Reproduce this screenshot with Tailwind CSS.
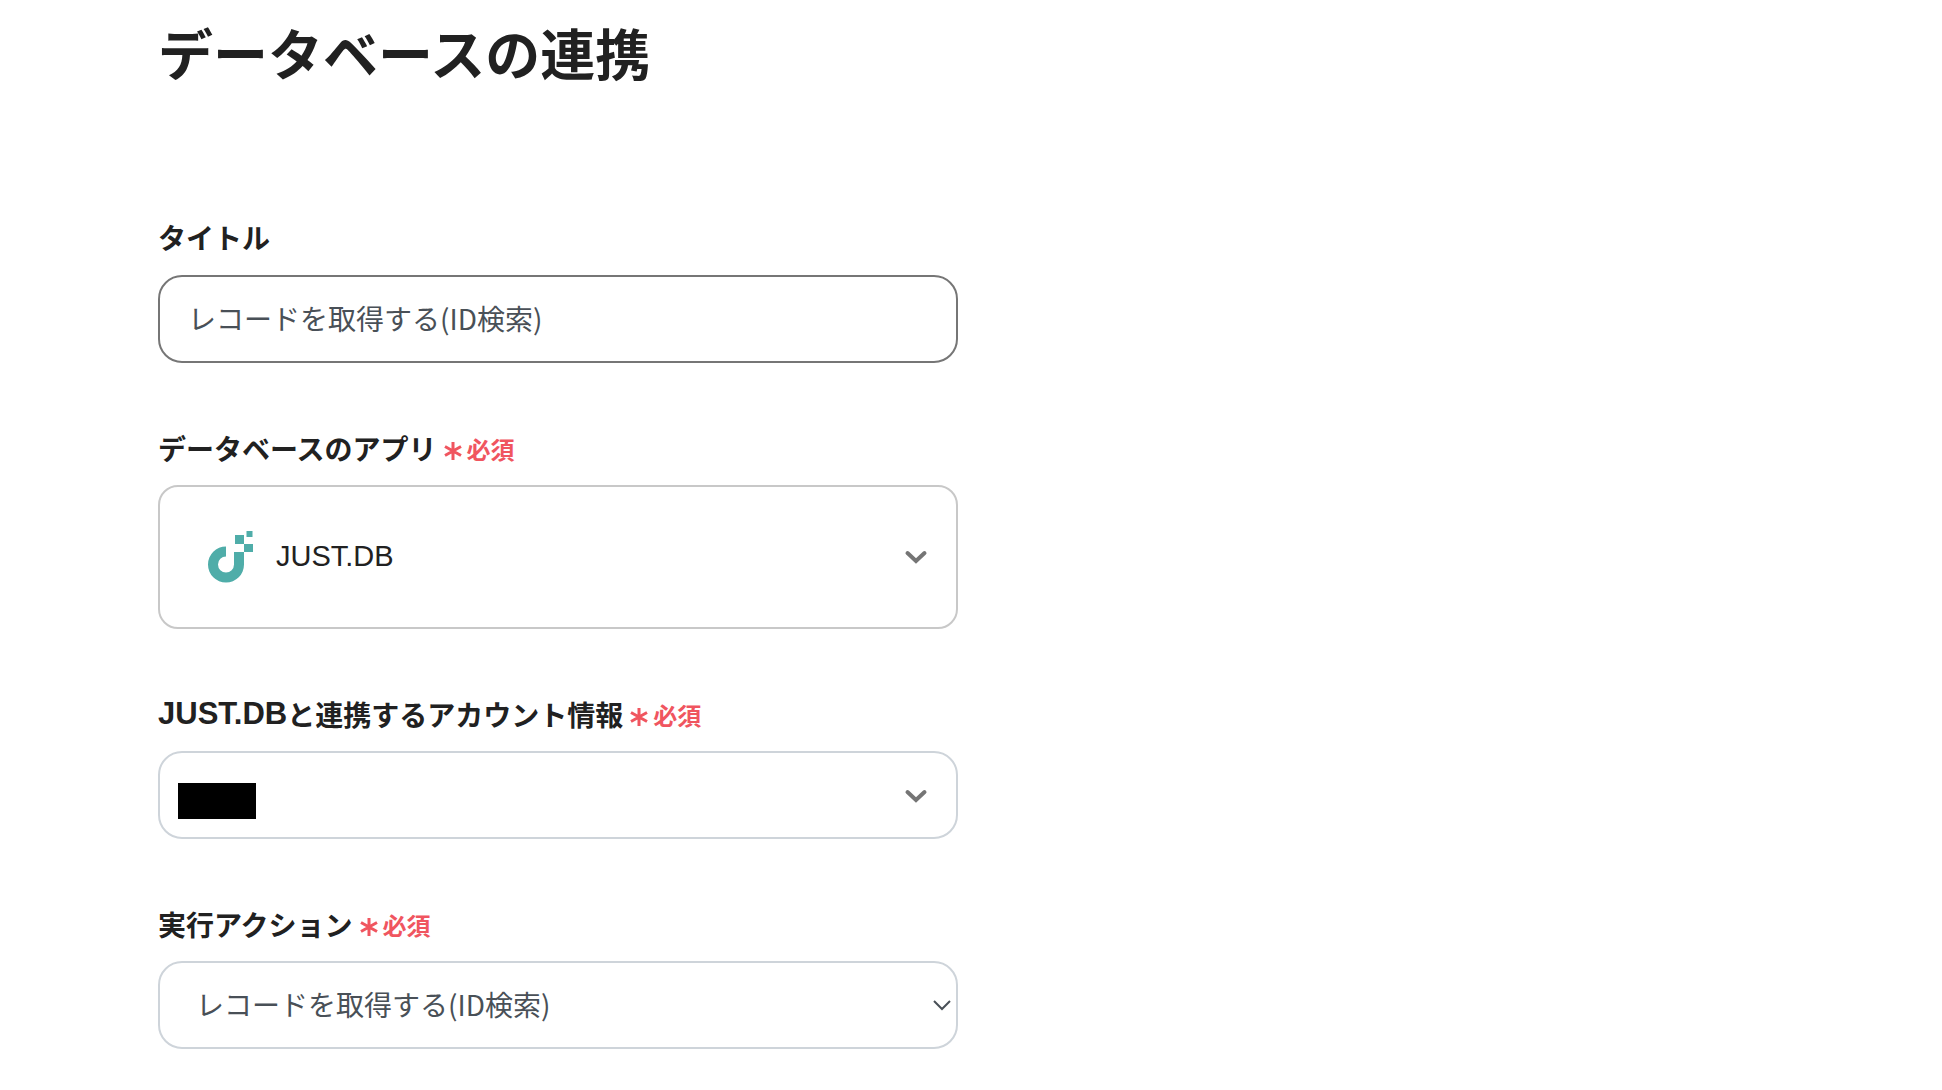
<!DOCTYPE html>
<html lang="ja">
  <head>
    <meta charset="UTF-8" />
    <meta name="viewport" content="width=device-width, initial-scale=1.0" />
    <title>データベースの連携</title>
    <script src="https://cdn.jsdelivr.net/npm/@tailwindcss/browser@4"></script>
  </head>
  <body class="bg-white text-[#212121] font-['Noto_Sans_CJK_JP',sans-serif]">
    <main class="px-[158px] pt-[11px] pb-10">
      <h1 class="text-[55px] leading-[80px] font-bold mb-[125px]">データベースの連携</h1>

      <form class="max-w-[800px] flex flex-col gap-16">
        <!-- Title -->
        <div class="flex flex-col gap-[17px]">
          <label for="title" class="text-[28px] leading-[42px] font-bold">タイトル</label>
          <input
            type="text"
            id="title"
            value="レコードを取得する(ID検索)"
            class="w-full h-[88px] px-7 pb-0.5 border-2 border-[#767676] rounded-3xl text-[28px] text-[#495057]"
          />
        </div>

        <!-- Database app -->
        <div class="flex flex-col gap-4">
          <label for="app" class="flex items-center text-[28px] leading-[42px] font-bold">
            データベースのアプリ
            <span class="flex items-center gap-1 ml-1.5 mt-0.5 text-2xl text-[#f0555f]">
              <svg class="w-5 h-5 mt-1" viewBox="0 0 20 20" fill="none" stroke="currentColor" stroke-width="3">
                <path d="M10 1v18M2 5.5l16 9M18 5.5l-16 9" />
              </svg>
              必須
            </span>
          </label>
          <button
            type="button"
            id="app"
            aria-haspopup="listbox"
            class="w-full h-36 pl-12 pr-7 flex items-center border-2 border-[#c8c8c8] rounded-[20px] text-left"
          >
            <svg class="w-[46px] h-[52px]" viewBox="0 0 46 52" fill="#4fada9">
              <path d="M18 15.5A18 18 0 1 0 36 33.5V21H26V33.5A8 8 0 1 1 18 25.5Z" />
              <path d="M27 4h9v9h-9zM36 13h9v8h-9zM38.5 0h6v6h-6z" />
            </svg>
            <span class="ml-[22px] text-[29px] font-['Liberation_Sans',sans-serif]">JUST.DB</span>
            <svg class="ml-auto w-6 h-6" viewBox="0 0 24 24" fill="none" stroke="#757575" stroke-width="4" stroke-linecap="round">
              <path d="M3.5 8l8.5 8L20.500 8" />
            </svg>
          </button>
        </div>

        <!-- Linked account -->
        <div class="flex flex-col gap-4">
          <label for="account" class="flex items-center text-[28px] leading-[42px] font-bold">
            <span class="text-[31px] font-['Liberation_Sans',sans-serif]">JUST.DB</span>と連携するアカウント情報
            <span class="flex items-center gap-1 ml-1.5 mt-0.5 text-2xl text-[#f0555f]">
              <svg class="w-5 h-5 mt-1" viewBox="0 0 20 20" fill="none" stroke="currentColor" stroke-width="3">
                <path d="M10 1v18M2 5.5l16 9M18 5.5l-16 9" />
              </svg>
              必須
            </span>
          </label>
          <button
            type="button"
            id="account"
            aria-haspopup="listbox"
            class="w-full h-[88px] pl-[18px] pr-7 flex items-center border-2 border-[#ced4da] rounded-3xl"
          >
            <span class="w-[78px] h-9 mt-3 bg-black"></span>
            <svg class="ml-auto w-6 h-6" viewBox="0 0 24 24" fill="none" stroke="#757575" stroke-width="4" stroke-linecap="round">
              <path d="M3.5 9l8.5 8L20.500 9" />
            </svg>
          </button>
        </div>

        <!-- Action -->
        <div class="flex flex-col gap-4">
          <label for="action" class="flex items-center text-[28px] leading-[42px] font-bold">
            実行アクション
            <span class="flex items-center gap-1 ml-1.5 mt-0.5 text-2xl text-[#f0555f]">
              <svg class="w-5 h-5 mt-1" viewBox="0 0 20 20" fill="none" stroke="currentColor" stroke-width="3">
                <path d="M10 1v18M2 5.5l16 9M18 5.5l-16 9" />
              </svg>
              必須
            </span>
          </label>
          <div class="relative">
            <select
              id="action"
              class="w-full h-[88px] px-9 pb-0.5 appearance-none border-2 border-[#ced4da] rounded-3xl text-[28px] text-[#495057]"
            >
              <option>レコードを取得する(ID検索)</option>
            </select>
            <svg
              class="absolute right-1.5 inset-y-0 my-auto w-5 h-5 pointer-events-none"
              viewBox="0 0 20 20"
              fill="none"
              stroke="#495057"
              stroke-width="2"
            >
              <path d="M2 6l8 8 8-8" />
            </svg>
          </div>
        </div>
      </form>
    </main>
  </body>
</html>
